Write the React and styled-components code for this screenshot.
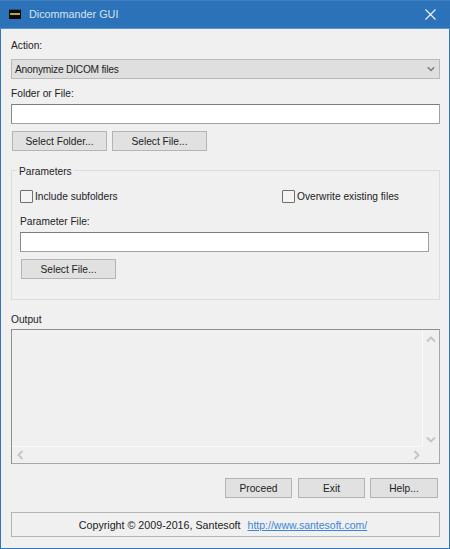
import styled, { createGlobalStyle } from "styled-components";

const GlobalStyle = createGlobalStyle`
  html, body {
    margin: 0;
    padding: 0;
    background: #f0f0f0;
  }
  * {
    box-sizing: border-box;
  }
`;

const Chevron = ({ dir = "down", color = "#c4c4c4", size = 10 }) => {
  const paths = {
    down: "M1 1.5 L5 5.5 L9 1.5",
    up: "M1 5.5 L5 1.5 L9 5.5",
    left: "M5.5 1 L1.5 5 L5.5 9",
    right: "M1.5 1 L5.5 5 L1.5 9",
  };
  const vertical = dir === "up" || dir === "down";
  const short = size * 0.7;
  return (
    <svg width={vertical ? size : short} height={vertical ? short : size} viewBox={vertical ? "0 0 10 7" : "0 0 7 10"}>
      <path d={paths[dir]} fill="none" stroke={color} strokeWidth="1.8" />
    </svg>
  );
};

const App = () => {
  return (
    <Window>
      <GlobalStyle />
      <TitleBar>
        <AppIcon viewBox="0 0 12 10" width="12" height="10">
          <rect width="12" height="10" fill="#0a0a0a" />
          <rect y="0" width="12" height="1" fill="#2b4f7a" />
          <rect x="1" y="4" width="10" height="2" fill="#b8a83a" />
        </AppIcon>
        <Title>Dicommander GUI</Title>
        <CloseIcon viewBox="0 0 11 11" width="11" height="11">
          <path d="M0.5 0.5 L10.5 10.5 M10.5 0.5 L0.5 10.5" stroke="#f2f6fb" strokeWidth="1.1" fill="none" />
        </CloseIcon>
      </TitleBar>
      <Body>
        <Label>Action:</Label>
        <Select>
          <span>Anonymize DICOM files</span>
          <Chevron color="#7a7a7a" size={8} />
        </Select>
        <Label $top={7}>Folder or File:</Label>
        <Input $top={4} />
        <ButtonRow>
          <Button>Select Folder...</Button>
          <Button>Select File...</Button>
        </ButtonRow>

        <Group>
          <Legend>Parameters</Legend>
          <CheckRow>
            <Check>
              <Box />
              Include subfolders
            </Check>
            <Check>
              <Box />
              Overwrite existing files
            </Check>
          </CheckRow>
          <Label $top={11}>Parameter File:</Label>
          <Input $top={4} />
          <ButtonRow>
            <Button>Select File...</Button>
          </ButtonRow>
        </Group>

        <Label $top={12}>Output</Label>
        <OutputBox>
          <OutputText />
          <VScroll>
            <Chevron dir="up" />
            <Chevron dir="down" />
          </VScroll>
          <HScroll>
            <Chevron dir="left" />
            <Chevron dir="right" />
          </HScroll>
        </OutputBox>

        <ActionRow>
          <ActionButton $width={67} $after={1}>Proceed</ActionButton>
          <ActionButton $width={67}>Exit</ActionButton>
          <ActionButton $width={68}>Help...</ActionButton>
        </ActionRow>

        <Footer>
          <Copyright>Copyright © 2009-2016, Santesoft</Copyright>
          <FooterLink href="#">http://www.santesoft.com/</FooterLink>
        </Footer>
      </Body>
    </Window>
  );
};

const Window = styled.div`
  width: 450px;
  height: 549px;
  display: flex;
  flex-direction: column;
  background: #f0f0f0;
  color: #222;
  font-family: "Liberation Sans", Arial, sans-serif;
  font-size: 10.2px;
  overflow: hidden;
`;
const TitleBar = styled.div`
  height: 29px;
  flex: none;
  display: flex;
  align-items: center;
  padding: 0 14px 1px 9px;
  background: #2b72b8;
  border-top: 1px solid #3f7fbe;
  border-bottom: 1px solid #5a93cb;
`;
const AppIcon = styled.svg`
  flex: none;
`;
const Title = styled.div`
  margin-left: 8px;
  flex: 1;
  color: #d5e4f3;
  font-size: 10.8px;
`;
const CloseIcon = styled.svg`
  flex: none;
`;
const Body = styled.div`
  flex: 1;
  display: flex;
  flex-direction: column;
  padding: 9px 9px 11px 10px;
  border: 1px solid #2f78bd;
  border-top: none;
`;
const Label = styled.div`
  height: 14px;
  line-height: 16px;
  margin-top: ${(p) => p.$top || 0}px;
`;
const Select = styled.div`
  height: 20px;
  margin-top: 7px;
  padding: 0 4px 0 3px;
  display: flex;
  align-items: center;
  justify-content: space-between;
  background: #dfdfdf;
  border: 1px solid #b9b9b9;
  letter-spacing: -0.22px;
`;
const Input = styled.input`
  display: block;
  width: 100%;
  height: 20px;
  margin-top: ${(p) => p.$top || 0}px;
  padding: 0 3px;
  background: #fff;
  border: 1px solid #a0a0a0;
  border-top-color: #7d7d7d;
  border-left-color: #8a8a8a;
  outline: none;
`;
const ButtonRow = styled.div`
  display: flex;
  gap: 5px;
  margin-top: 7px;
  padding-left: 1px;
`;
const Button = styled.button`
  width: 95px;
  height: 20px;
  padding: 0;
  background: #e1e1e1;
  border: 1px solid #b4b4b4;
  color: inherit;
  font: inherit;
`;
const Group = styled.div`
  position: relative;
  height: 130px;
  margin-top: 19px;
  padding: 19px 10px 0 8px;
  border: 1px solid #dcdcdc;
`;
const Legend = styled.div`
  position: absolute;
  top: -8px;
  left: 5px;
  height: 14px;
  padding: 0 2px;
  background: #f0f0f0;
  line-height: 18px;
`;
const CheckRow = styled.div`
  display: grid;
  grid-template-columns: 262px 1fr;
  height: 13px;
`;
const Check = styled.label`
  display: flex;
  align-items: center;
  gap: 2px;
  line-height: 13px;
`;
const Box = styled.span`
  flex: none;
  width: 13px;
  height: 13px;
  background: #f4f4f4;
  border: 1px solid #6f6f6f;
  border-radius: 1px;
`;
const OutputBox = styled.div`
  height: 135px;
  margin-top: 3px;
  display: grid;
  grid-template-columns: 1fr 16px;
  grid-template-rows: 1fr 16px;
  border: 1px solid #a6a6a6;
  border-top-color: #8f8f8f;
  border-left-color: #8f8f8f;
`;
const OutputText = styled.div`
  border-right: 1px solid #fafafa;
  border-bottom: 1px solid #fafafa;
`;
const VScroll = styled.div`
  display: flex;
  flex-direction: column;
  align-items: center;
  justify-content: space-between;
  padding: 6px 0 20px;
  grid-row: 1 / span 2;
  grid-column: 2;
`;
const HScroll = styled.div`
  display: flex;
  align-items: center;
  justify-content: space-between;
  padding: 0 3px 1px 5px;
`;
const ActionRow = styled.div`
  display: flex;
  justify-content: flex-end;
  gap: 5px;
  margin-top: 14px;
  padding-right: 2px;
`;
const ActionButton = styled(Button)`
  width: ${(p) => p.$width}px;
  margin-right: ${(p) => p.$after || 0}px;
`;
const Footer = styled.div`
  height: 25px;
  margin-top: 14px;
  display: flex;
  align-items: center;
  justify-content: center;
  gap: 7px;
  padding-right: 5px;
  border: 1px solid #b4b4b4;
`;
const Copyright = styled.span`
  font-size: 10.7px;
`;
const FooterLink = styled.a`
  color: #3a85d8;
  font-size: 10.5px;
  text-decoration: underline;
`;

export default App;
